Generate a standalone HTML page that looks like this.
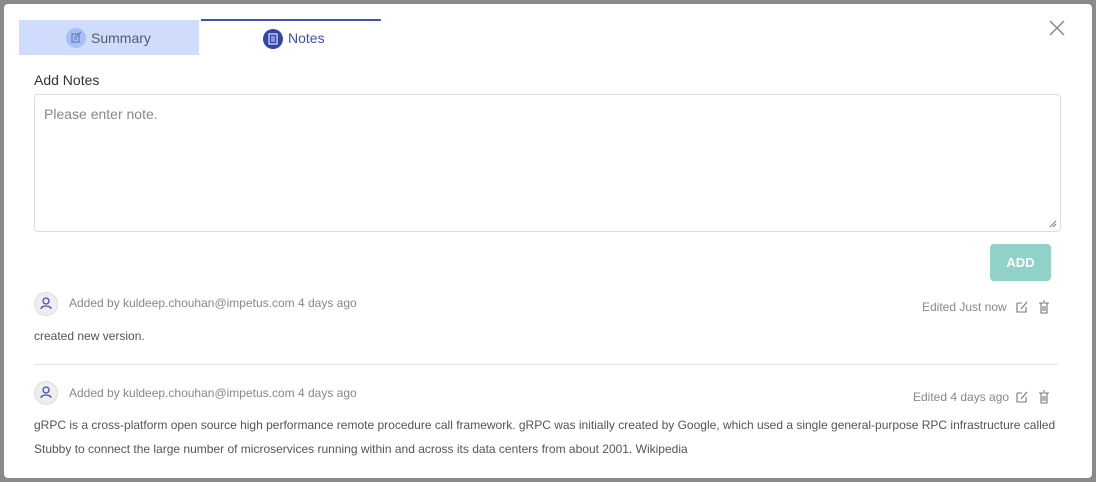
<!DOCTYPE html>
<html><head><style>
body{margin:0;width:1096px;height:482px;background:#8a8a8a;font-family:"Liberation Sans",sans-serif;position:relative;overflow:hidden}
.m{position:absolute;left:4px;top:4px;width:1088px;height:474px;background:#fff;border-radius:4px}
.a{position:absolute}
.tab1{left:15px;top:16px;width:180px;height:35px;background:#d0dcfc;color:#555a6a;font-size:14px}
.tab2{left:197px;top:15px;width:180px;height:36px;border-top:2px solid #3f51b5;color:#3f51b5;font-size:14px}
.ic{position:absolute;width:20px;height:20px;border-radius:50%}
.g{color:#888;font-size:12px}
.t{color:#555;font-size:12px}
.av{width:22px;height:22px;border-radius:50%;background:#eee;border:1px solid #ddd}
</style></head><body><div class="m">
<div class="a tab1"><div class="ic" style="left:47px;top:8px;background:#a9bff7"><svg width="20" height="20"><rect x="6" y="6" width="7" height="8" fill="none" stroke="#6a7fc4" stroke-width="1.3"/><path d="M8 9h3M8 11h3M11 8l4-4" stroke="#6a7fc4" stroke-width="1.3"/></svg></div><span class="a" style="left:72px;top:10px">Summary</span></div>
<div class="a tab2"><div class="ic" style="left:62px;top:8px;background:#3346a8"><svg width="20" height="20"><rect x="6" y="5" width="8" height="10" fill="none" stroke="#dfe4ff" stroke-width="1.2"/><path d="M8 8h4M8 10h4M8 12h4" stroke="#dfe4ff"/></svg></div><span class="a" style="left:87px;top:9px">Notes</span></div>
<svg class="a" style="left:1045px;top:16px" width="16" height="16"><path d="M1 1L15 15M15 1L1 15" stroke="#888" stroke-width="1.5"/></svg>
<div class="a" style="left:30px;top:68px;font-size:14px;color:#333">Add Notes</div>
<div class="a" style="left:30px;top:90px;width:1025px;height:136px;border:1px solid #ddd;border-radius:4px"><span class="a" style="left:9px;top:11px;font-size:14px;color:#888">Please enter note.</span><svg class="a" style="right:3px;bottom:3px" width="8" height="8"><path d="M7 1L1 7M7 4L4 7" stroke="#777"/></svg></div>
<div class="a" style="left:986px;top:240px;width:61px;height:37px;background:#90d1c9;border-radius:4px;color:#fff;font-weight:bold;font-size:13px;text-align:center;line-height:37px">ADD</div>
<div class="a av" style="left:30px;top:288px"><svg width="22" height="22"><circle cx="11" cy="8" r="3" fill="none" stroke="#3f51b5" stroke-width="1.3"/><path d="M6 16c0-4 10-4 10 0" fill="none" stroke="#3f51b5" stroke-width="1.3"/></svg></div>
<div class="a g" style="left:65px;top:292px">Added by kuldeep.chouhan@impetus.com 4 days ago</div>
<div class="a g" style="left:918px;top:296px">Edited Just now</div>
<div class="a t" style="left:30px;top:325px">created new version.</div>
<div class="a" style="left:30px;top:360px;width:1025px;height:1px;background:#e3e3e3"></div>
<div class="a av" style="left:30px;top:377px"><svg width="22" height="22"><circle cx="11" cy="8" r="3" fill="none" stroke="#3f51b5" stroke-width="1.3"/><path d="M6 16c0-4 10-4 10 0" fill="none" stroke="#3f51b5" stroke-width="1.3"/></svg></div>
<div class="a g" style="left:65px;top:382px">Added by kuldeep.chouhan@impetus.com 4 days ago</div>
<div class="a g" style="left:909px;top:386px">Edited 4 days ago</div>
<div class="a t" style="left:30px;top:409px;width:1030px;line-height:24px">gRPC is a cross-platform open source high performance remote procedure call framework. gRPC was initially created by Google, which used a single general-purpose RPC infrastructure called Stubby to connect the large number of microservices running within and across its data centers from about 2001. Wikipedia</div>
<svg class="a" style="left:1011px;top:296px" width="40" height="14"><path d="M2 3h5M2 3v9h9V7M6 9l6-7" fill="none" stroke="#777" stroke-width="1.1"/><path d="M24 3h10M26 3v10h6V3M28 1h2M28 6v5M30 6v5" fill="none" stroke="#777" stroke-width="1.1"/></svg>
<svg class="a" style="left:1011px;top:386px" width="40" height="14"><path d="M2 3h5M2 3v9h9V7M6 9l6-7" fill="none" stroke="#777" stroke-width="1.1"/><path d="M24 3h10M26 3v10h6V3M28 1h2M28 6v5M30 6v5" fill="none" stroke="#777" stroke-width="1.1"/></svg>
</div></body></html>
